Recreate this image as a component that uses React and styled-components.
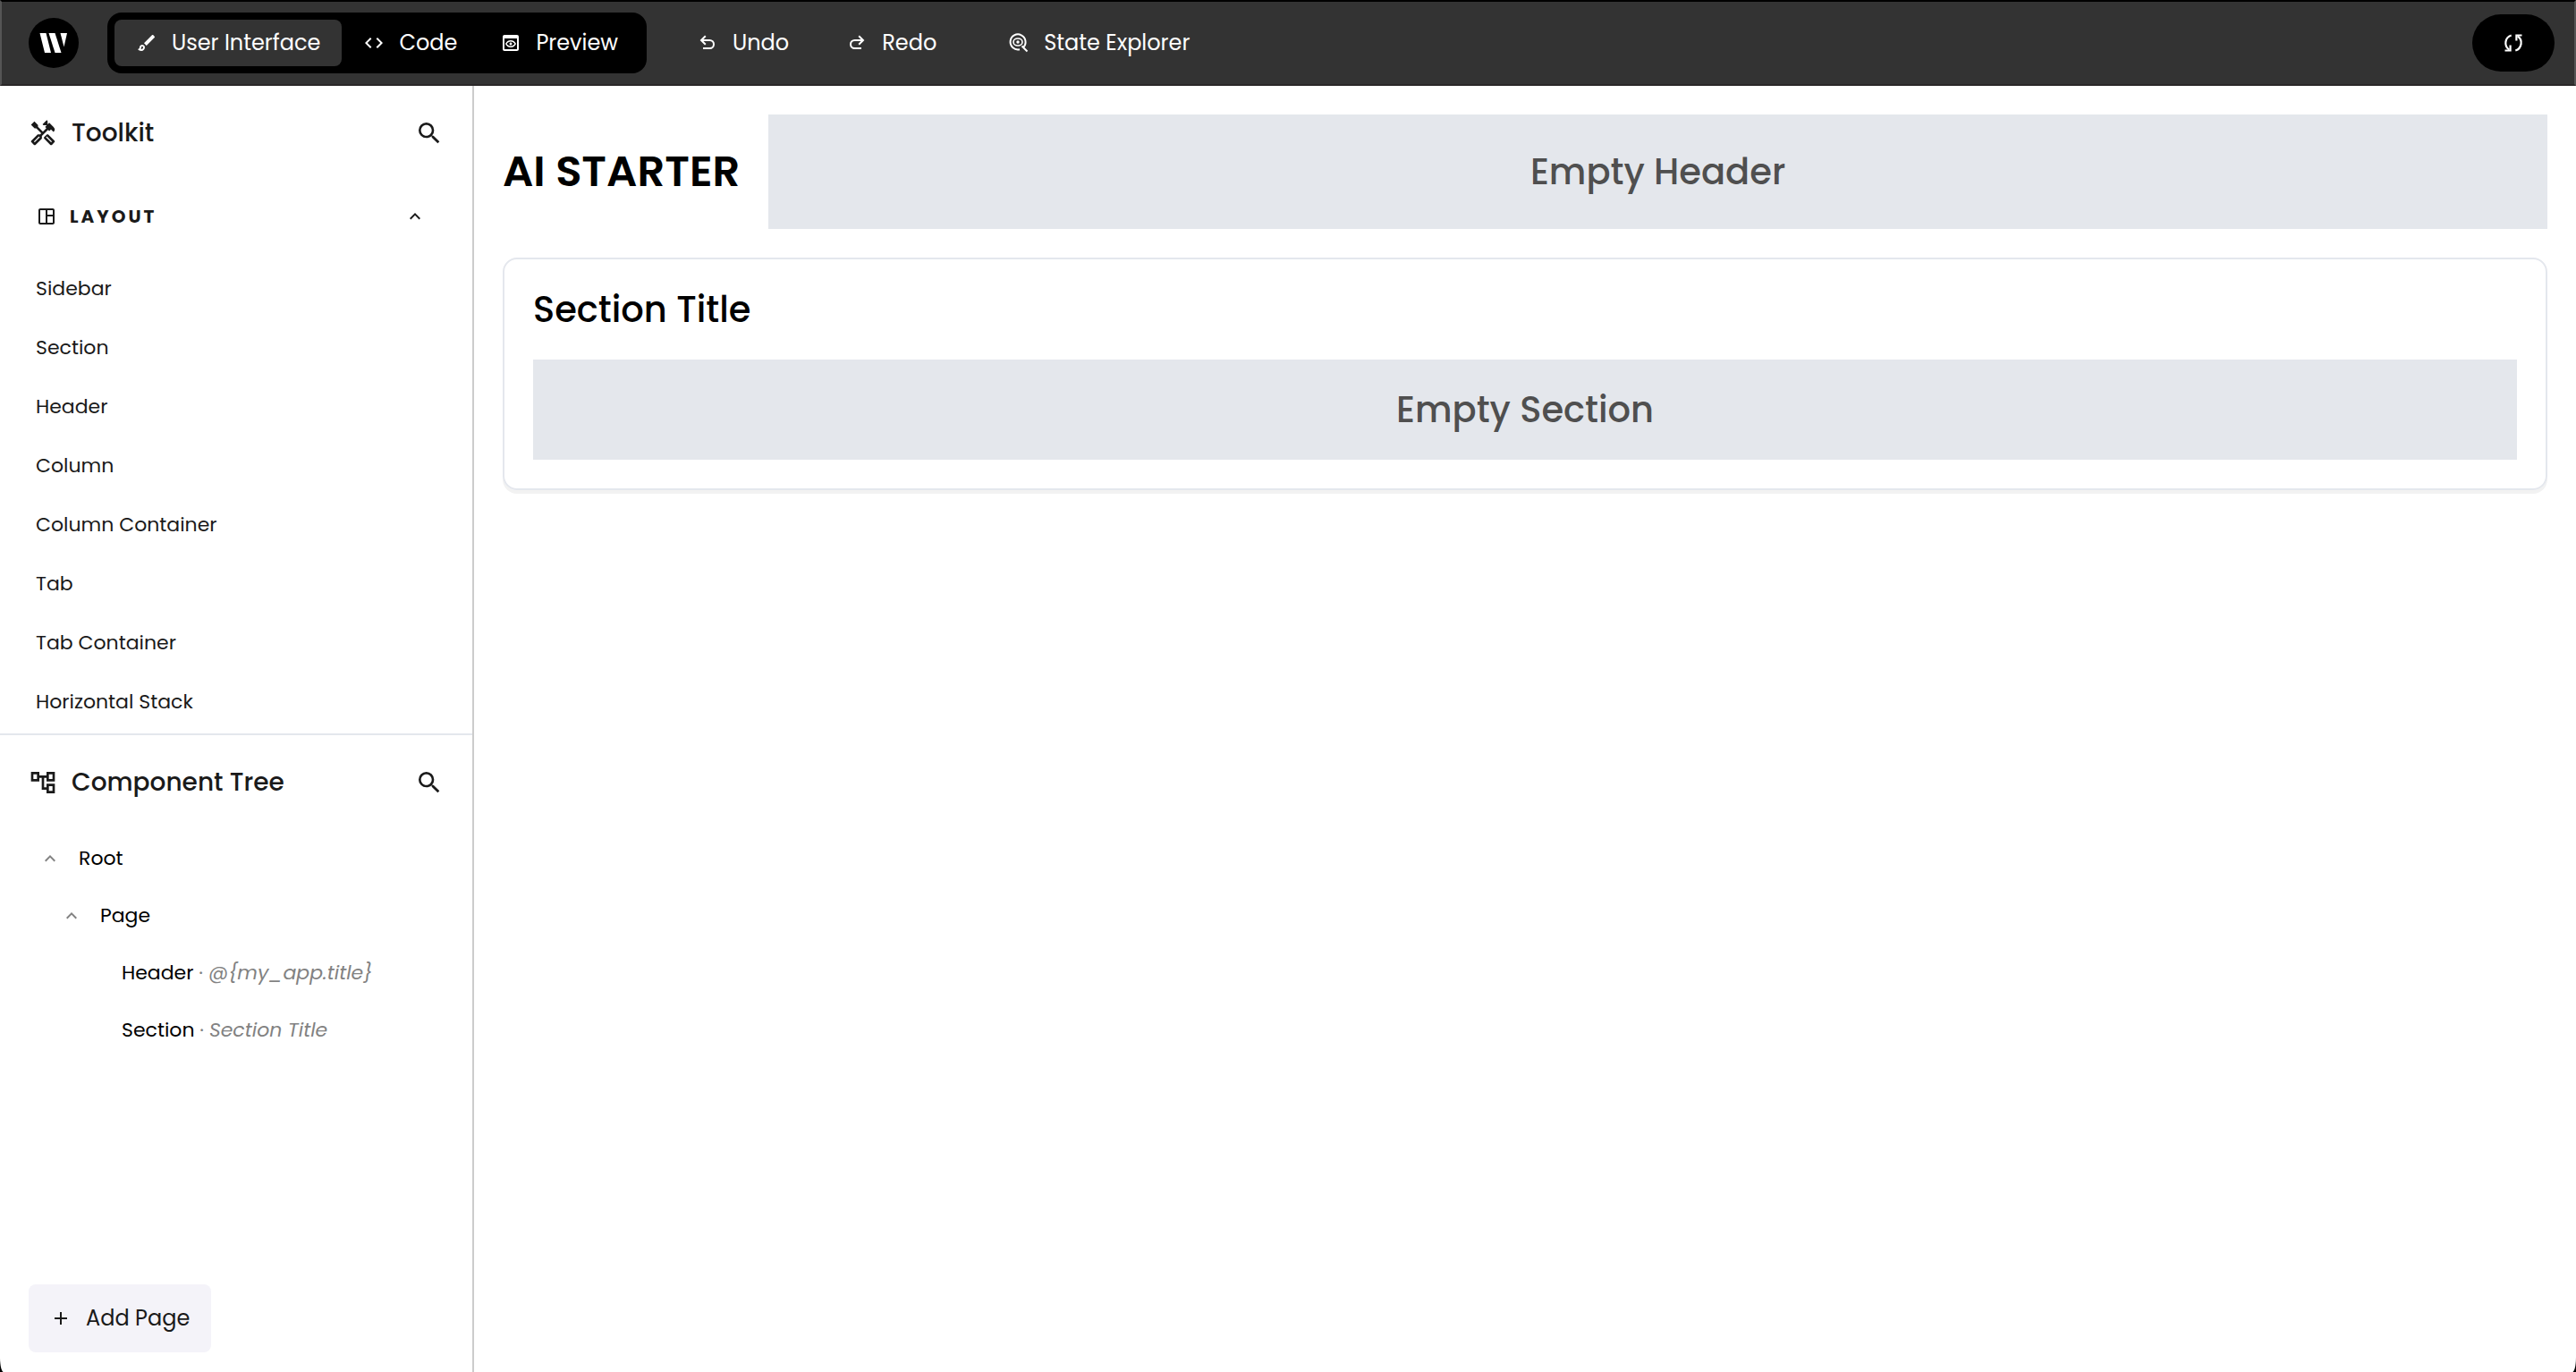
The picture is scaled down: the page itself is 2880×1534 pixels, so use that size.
import React from "react";
import styled, { createGlobalStyle, css } from "styled-components";
import {
  MdAdd,
  MdCode,
  MdExpandLess,
  MdOutlineAccountTree,
  MdOutlineBrush,
  MdOutlineHandyman,
  MdOutlinePreview,
  MdOutlineSpaceDashboard,
  MdSearch,
} from "react-icons/md";

const GlobalStyle = createGlobalStyle`
  *, *::before, *::after { box-sizing: border-box; }
  body {
    margin: 0;
    background: #000;
    color: #000;
    font-family: Poppins, Inter, "Liberation Sans", sans-serif;
  }
  h1, h2, p, ul { margin: 0; padding: 0; }
  ul { list-style: none; }
  button { font: inherit; color: inherit; border: 0; background: none; padding: 0; cursor: pointer; }
  svg { flex: none; display: block; }
`;

const Shell = styled.div`
  display: flex;
  flex-direction: column;
  min-height: 100vh;
  background: #fff;
  border-bottom-left-radius: 4px 16px;
  border-bottom-right-radius: 4px 16px;
  overflow: hidden;
`;

const TopBar = styled.header`
  display: flex;
  align-items: center;
  height: 96px;
  padding: 0 22px 0 30px;
  background: #333;
  border: 2px solid #555;
  border-top-color: #000;
  border-bottom-color: #2a2728;
  color: #fff;
  font-size: 24px;
  line-height: 36px;
`;

const Logo = styled.a`
  display: flex;
  align-items: center;
  justify-content: center;
  width: 56px;
  height: 56px;
  margin-right: 32px;
  border-radius: 50%;
  background: #000;
  color: #fff;
`;

const Tabs = styled.nav`
  display: flex;
  padding: 8px;
  border-radius: 16px;
  background: #000;
`;

const BarButton = styled.button`
  display: flex;
  align-items: center;
  gap: 16px;
  padding: 8px 24px;
  border-radius: 8px;
  white-space: nowrap;
  ${(p) => p.$active && css`background: #333;`}
`;

const Actions = styled.div`
  display: flex;
  gap: 16px;
  margin-left: 32px;
`;

const SyncButton = styled.button`
  display: flex;
  align-items: center;
  justify-content: center;
  width: 92px;
  height: 64px;
  margin-left: auto;
  border-radius: 32px;
  background: #000;
`;

const Body = styled.div`
  display: flex;
  flex: 1;
`;

const Sidebar = styled.aside`
  display: flex;
  flex-direction: column;
  flex: none;
  width: 530px;
  border-right: 2px solid #ccc;
  color: #1a1a1a;
`;

const Panel = styled.section`
  display: flex;
  flex-direction: column;
  ${(p) => p.$grow && css`
    flex: 1;
    border-top: 2px solid #e4e7ed;
  `}
`;

const PanelHeader = styled.div`
  display: flex;
  align-items: center;
  gap: 16px;
  padding: 32px 32px 24px;
`;

const PanelTitle = styled.h2`
  flex: 1;
  font-size: 28px;
  font-weight: 500;
  line-height: 42px;
`;

const GroupHeader = styled.button`
  display: flex;
  align-items: center;
  gap: 14px;
  padding: 32px 52px 22px 40px;
  font-size: 20px;
  font-weight: 700;
  line-height: 32px;
`;

const GroupName = styled.span`
  flex: 1;
  text-align: left;
  letter-spacing: 3px;
`;

const ToolItem = styled.li`
  padding: 16px 40px;
  font-size: 22px;
  line-height: 34px;
`;

const ToolList = styled.ul`
  padding: 10px 0 2px;
`;

const Tree = styled.ul`
  flex: 1;
  padding-top: 8px;
  color: #000;
`;

const TreeRow = styled.li`
  display: flex;
  align-items: center;
  gap: 20px;
  height: 64px;
  padding-left: ${(p) => 44 + p.$depth * 24}px;
  font-size: 22px;
  line-height: 34px;
`;

const toggleBox = css`
  flex: none;
  width: 24px;
  height: 24px;
  color: #828282;
`;

const Toggle = styled.button`${toggleBox}`;

const ToggleSpace = styled.span`
  ${toggleBox}
  margin-right: -24px;
`;

const NodeHint = styled.span`
  color: #828282;
`;

const AddPage = styled.button`
  display: flex;
  align-items: center;
  align-self: flex-start;
  gap: 16px;
  margin: 0 32px 22px;
  padding: 20px 24px;
  border-radius: 8px;
  background: #f4f3f9;
  font-size: 24px;
  line-height: 36px;
`;

const Canvas = styled.main`
  display: flex;
  flex-direction: column;
  flex: 1;
  gap: 32px;
  padding: 32px;
`;

const AppHeader = styled.div`
  display: flex;
  align-items: center;
  gap: 32px;
`;

const AppTitle = styled.h1`
  font-size: 48px;
  font-weight: 600;
  line-height: 72px;
  white-space: nowrap;
`;

const Placeholder = styled.div`
  flex: 1;
  display: flex;
  align-items: center;
  justify-content: center;
  padding: ${(p) => (p.$tall ? 34 : 26)}px 32px;
  background: #e4e7ec;
  color: #4f4f4f;
  font-size: 40px;
  font-weight: 500;
  line-height: 60px;
`;

const Card = styled.section`
  display: flex;
  flex-direction: column;
  gap: 32px;
  padding: 32px;
  border: 2px solid #e4e7ed;
  border-radius: 16px;
  box-shadow: 0 4px 0 #f2f2f2;
`;

const CardTitle = styled.h2`
  font-size: 40px;
  font-weight: 500;
  line-height: 48px;
`;

const LogoMark = () => (
  <svg width="32" height="24" viewBox="0 0 32 24" fill="currentColor" aria-hidden="true">
    <path d="M0.5 1H7.5L13 23H6Z" />
    <path d="M10.5 1H17.5L24.5 23H17.5Z" />
    <path d="M23.5 1H31L27.5 16.5Z" />
  </svg>
);

const UndoIcon = ({ flip }) => (
  <svg width="24" height="24" viewBox="0 0 24 24" fill="none" stroke="currentColor" strokeWidth="2" aria-hidden="true">
    <g transform={flip ? "translate(24 0) scale(-1 1)" : undefined}>
      <path d="M7 18H14.5A4.5 4.5 0 0 0 14.5 9H5.5" />
      <path d="M9.8 4.2L5 9L9.8 13.8" />
    </g>
  </svg>
);

const ExplorerIcon = () => (
  <svg width="24" height="24" viewBox="0 0 24 24" fill="none" stroke="currentColor" strokeWidth="2" aria-hidden="true">
    <path d="M17 17A8.5 8.5 0 1 0 13 19.2" />
    <path d="M15.5 15.5L21.5 21.5" />
    <ellipse cx="11" cy="11" rx="5" ry="4" strokeWidth="1.6" />
    <circle cx="11" cy="11" r="1.7" fill="currentColor" stroke="none" />
  </svg>
);

const SyncIcon = () => (
  <svg width="24" height="24" viewBox="0 0 24 24" fill="none" stroke="currentColor" strokeWidth="2.2" aria-hidden="true">
    <path d="M9.7 3.5A9 9 0 0 0 7.2 19.5" />
    <path d="M2.5 20.5H8.6V14.4" />
    <path d="M14.3 20.5A9 9 0 0 0 16.8 4.5" />
    <path d="M21.5 3.5H15.4V9.6" />
  </svg>
);

const TOOLS = [
  "Sidebar",
  "Section",
  "Header",
  "Column",
  "Column Container",
  "Tab",
  "Tab Container",
  "Horizontal Stack",
];

const NODES = [
  { name: "Root", depth: 0, open: true },
  { name: "Page", depth: 1, open: true },
  { name: "Header", depth: 3, hint: "@{my_app.title}" },
  { name: "Section", depth: 3, hint: "Section Title" },
];

export default function App() {
  return (
    <Shell>
      <GlobalStyle />
      <TopBar>
        <Logo href="#" aria-label="Home"><LogoMark /></Logo>
        <Tabs>
          <BarButton $active><MdOutlineBrush size={24} />User Interface</BarButton>
          <BarButton><MdCode size={24} />Code</BarButton>
          <BarButton><MdOutlinePreview size={24} />Preview</BarButton>
        </Tabs>
        <Actions>
          <BarButton><UndoIcon />Undo</BarButton>
          <BarButton><UndoIcon flip />Redo</BarButton>
        </Actions>
        <Actions>
          <BarButton><ExplorerIcon />State Explorer</BarButton>
        </Actions>
        <SyncButton aria-label="Sync"><SyncIcon /></SyncButton>
      </TopBar>
      <Body>
        <Sidebar>
          <Panel>
            <PanelHeader>
              <MdOutlineHandyman size={32} />
              <PanelTitle>Toolkit</PanelTitle>
              <button aria-label="Search toolkit"><MdSearch size={32} /></button>
            </PanelHeader>
            <GroupHeader>
              <MdOutlineSpaceDashboard size={24} />
              <GroupName>LAYOUT</GroupName>
              <MdExpandLess size={24} />
            </GroupHeader>
            <ToolList>
              {TOOLS.map((tool) => <ToolItem key={tool}>{tool}</ToolItem>)}
            </ToolList>
          </Panel>
          <Panel $grow>
            <PanelHeader>
              <MdOutlineAccountTree size={32} />
              <PanelTitle>Component Tree</PanelTitle>
              <button aria-label="Search component tree"><MdSearch size={32} /></button>
            </PanelHeader>
            <Tree>
              {NODES.map((node) => (
                <TreeRow key={node.name} $depth={node.depth}>
                  {node.open ? (
                    <Toggle aria-label={`Collapse ${node.name}`}><MdExpandLess size={24} /></Toggle>
                  ) : (
                    <ToggleSpace />
                  )}
                  <span>
                    {node.name}
                    {node.hint && <NodeHint> · <em>{node.hint}</em></NodeHint>}
                  </span>
                </TreeRow>
              ))}
            </Tree>
            <AddPage><MdAdd size={24} />Add Page</AddPage>
          </Panel>
        </Sidebar>
        <Canvas>
          <AppHeader>
            <AppTitle>AI STARTER</AppTitle>
            <Placeholder $tall>Empty Header</Placeholder>
          </AppHeader>
          <Card>
            <CardTitle>Section Title</CardTitle>
            <Placeholder>Empty Section</Placeholder>
          </Card>
        </Canvas>
      </Body>
    </Shell>
  );
}
